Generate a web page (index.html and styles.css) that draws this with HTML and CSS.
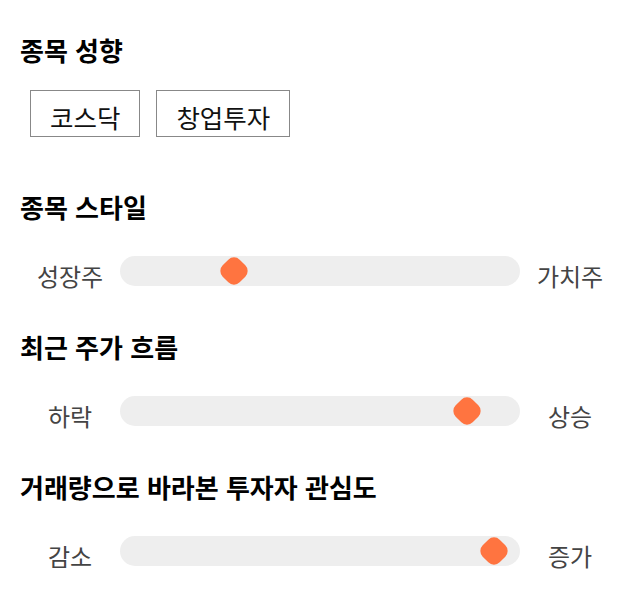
FILE: index.html
```html
<!DOCTYPE html>
<html lang="ko">
<head>
<meta charset="utf-8">
<title>투자 성향</title>
<link rel="stylesheet" href="styles.css">
</head>
<body>
<div class="page">
  <section class="section">
    <h2 class="title">종목 성향</h2>
    <div class="chips">
      <span class="chip">코스닥</span>
      <span class="chip">창업투자</span>
    </div>
  </section>
  <section class="section">
    <h2 class="title">종목 스타일</h2>
    <div class="slider">
      <span class="label">성장주</span>
      <div class="track"><span class="thumb" style="left:114px"></span></div>
      <span class="label">가치주</span>
    </div>
  </section>
  <section class="section">
    <h2 class="title">최근 주가 흐름</h2>
    <div class="slider">
      <span class="label">하락</span>
      <div class="track"><span class="thumb" style="left:347px"></span></div>
      <span class="label">상승</span>
    </div>
  </section>
  <section class="section">
    <h2 class="title">거래량으로 바라본 투자자 관심도</h2>
    <div class="slider">
      <span class="label">감소</span>
      <div class="track"><span class="thumb" style="left:374px"></span></div>
      <span class="label">증가</span>
    </div>
  </section>
</div>
</body>
</html>
```
FILE: styles.css
```css
html, body {
  margin: 0;
  background: #ffffff;
}
body {
  font-family: "Noto Sans CJK KR", "Noto Sans", sans-serif;
  color: #000000;
}
.page {
  padding: 34px 20px 0;
  display: flex;
  flex-direction: column;
}
.section {
  display: flex;
  flex-direction: column;
}
.section + .section {
  margin-top: 54px;
}
.section:nth-child(n+3) {
  margin-top: 40px;
}
.title {
  margin: 0;
  font-size: 26px;
  font-weight: 700;
  line-height: 32px;
}
.chips {
  display: flex;
  gap: 16px;
  margin: 24px 0 0 10px;
}
.chip {
  border: 1px solid #888888;
  padding: 7px 19px 0;
  font-size: 25.5px;
  line-height: 38px;
  color: #111111;
}
.slider {
  display: grid;
  grid-template-columns: 100px 400px 100px;
  align-items: start;
  margin-top: 33px;
}
.label {
  text-align: center;
  font-size: 24px;
  line-height: 30px;
  padding-top: 5px;
  color: #444444;
}
.track {
  position: relative;
  height: 30px;
  border-radius: 15px;
  background: #eeeeee;
}
.thumb {
  position: absolute;
  top: 3px;
  width: 24px;
  height: 24px;
  margin-left: -12px;
  border-radius: 8px;
  background: #ff7440;
  transform: rotate(45deg);
}
```
